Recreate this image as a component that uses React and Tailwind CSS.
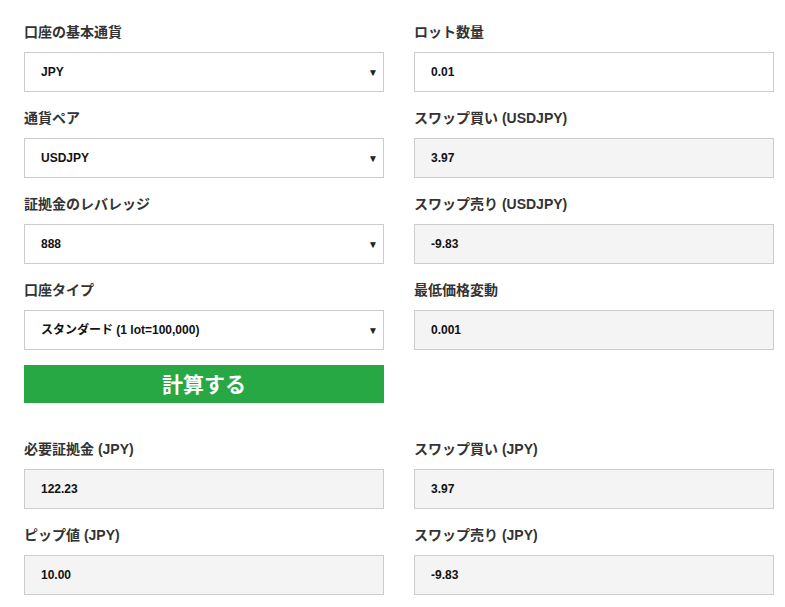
const font = { fontFamily: '"Liberation Sans", "Noto Sans CJK JP", sans-serif' };

function Field({ label, value, kind = 'input' }) {
  const box =
    kind === 'readonly'
      ? 'bg-[#f4f4f4]'
      : 'bg-white';
  return (
    <div className="flex flex-col">
      <label className="h-5 leading-5 mb-[10px] text-[14px] font-bold text-[#333]">{label}</label>
      <div className={`h-10 border border-[#ccc] flex items-center justify-between pl-4 pr-[5px] text-[12px] font-bold text-[#111] ${box}`}>
        <span>{value}</span>
        {kind === 'select' && <span className="text-[10px] text-[#222]">▼</span>}
      </div>
    </div>
  );
}

export default function App() {
  return (
    <div className="w-[785px] min-h-[607px] bg-white pl-6 pt-[22px]" style={font}>
      <div className="w-[750px]">
        <div className="grid grid-cols-2 gap-x-[30px]">
          <div className="flex flex-col gap-4">
            <Field label="口座の基本通貨" value="JPY" kind="select" />
            <Field label="通貨ペア" value="USDJPY" kind="select" />
            <Field label="証拠金のレバレッジ" value="888" kind="select" />
            <Field label="口座タイプ" value="スタンダード (1 lot=100,000)" kind="select" />
          </div>
          <div className="flex flex-col gap-4">
            <Field label="ロット数量" value="0.01" />
            <Field label="スワップ買い (USDJPY)" value="3.97" kind="readonly" />
            <Field label="スワップ売り (USDJPY)" value="-9.83" kind="readonly" />
            <Field label="最低価格変動" value="0.001" kind="readonly" />
          </div>
        </div>
        <div className="grid grid-cols-2 gap-x-[30px] mt-[15px]">
          <button className="h-[38px] bg-[#28a745] text-white text-[21px] font-bold leading-none">計算する</button>
        </div>
        <div className="grid grid-cols-2 gap-x-[30px] gap-y-4 mt-9">
          <Field label="必要証拠金 (JPY)" value="122.23" kind="readonly" />
          <Field label="スワップ買い (JPY)" value="3.97" kind="readonly" />
          <Field label="ピップ値 (JPY)" value="10.00" kind="readonly" />
          <Field label="スワップ売り (JPY)" value="-9.83" kind="readonly" />
        </div>
      </div>
    </div>
  );
}
